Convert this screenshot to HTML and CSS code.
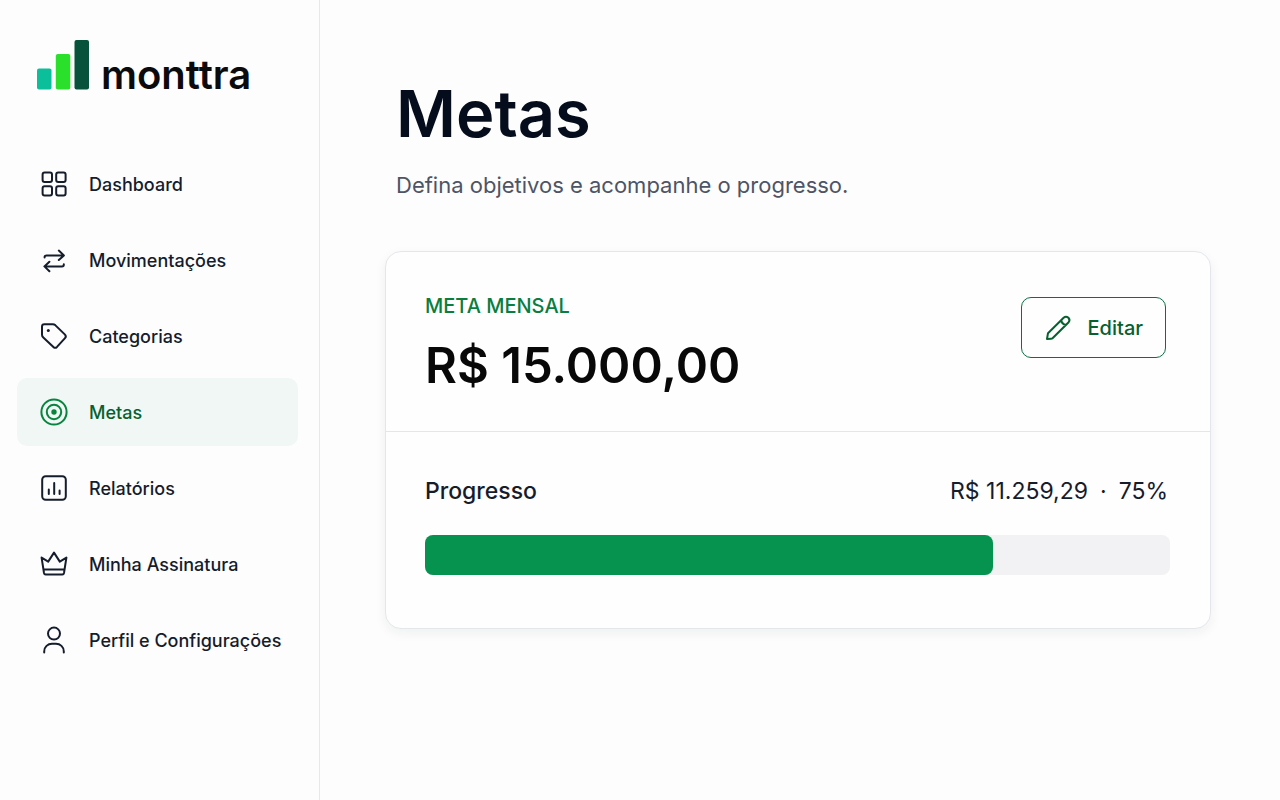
FILE: index.html
```html
<!DOCTYPE html>
<html lang="pt-BR">
<head>
<meta charset="utf-8">
<meta name="viewport" content="width=device-width, initial-scale=1">
<title>Metas · monttra</title>
<link rel="stylesheet" href="styles.css">
</head>
<body>
<div class="app">
  <aside class="sidebar">
    <a class="brand" href="#">
      <svg class="brand-mark" viewBox="0 0 52 50" aria-hidden="true">
        <rect x="0" y="28.500" width="14.500" height="21" rx="2" fill="#0bbf9b"/>
        <rect x="18.800" y="14" width="14.500" height="35.500" rx="2" fill="#2be02b"/>
        <rect x="37.500" y="0" width="14.500" height="49.500" rx="2" fill="#06523a"/>
      </svg>
      <span class="brand-name">monttra</span>
    </a>
    <nav class="nav" aria-label="Principal">
      <a class="nav-item" href="#">
        <svg class="icon" viewBox="0 0 28 28" aria-hidden="true"><rect x="2.600" y="2.600" width="9.400" height="9.400" rx="2"/><rect x="16.200" y="2.600" width="9.400" height="9.400" rx="2"/><rect x="2.600" y="16.200" width="9.400" height="9.400" rx="2"/><rect x="16.200" y="16.200" width="9.400" height="9.400" rx="2"/></svg>
        <span>Dashboard</span>
      </a>
      <a class="nav-item" href="#">
        <svg class="icon" viewBox="0 0 28 28" aria-hidden="true"><path d="M4.600 11.600V11Q4.600 9.400 6.400 9.400H23.800M18.800 4.600L23.900 9.400L18.800 14M23.800 18.200V18.800Q23.800 20.400 22 20.400H4.800M9.400 15.800L4.400 20.400L9.400 25.200"/></svg>
        <span>Movimentações</span>
      </a>
      <a class="nav-item" href="#">
        <svg class="icon" viewBox="0 0 28 28" aria-hidden="true"><path d="M2 4.600Q2 2.200 4.400 2.200H12.800Q14.200 2.200 15.200 3.100L25 12.600Q26.600 14.400 25 16.200L17 24.900Q15.200 26.600 13.400 24.900L3.300 15.600Q2 14.400 2 12.800Z"/><circle class="solid" cx="8.300" cy="8.500" r="1.500"/></svg>
        <span>Categorias</span>
      </a>
      <a class="nav-item nav-item-active" href="#" aria-current="page">
        <svg class="icon" viewBox="0 0 28 28" aria-hidden="true"><circle cx="14" cy="14" r="12.600"/><circle cx="14" cy="14" r="7.200"/><circle class="solid" cx="14" cy="14" r="2.700"/></svg>
        <span>Metas</span>
      </a>
      <a class="nav-item" href="#">
        <svg class="icon" viewBox="0 0 28 28" aria-hidden="true"><rect x="2.200" y="2.200" width="23.600" height="23.600" rx="3.500"/><path d="M8.800 15.400V20M14.200 9V20M19.600 16.600V20"/></svg>
        <span>Relatórios</span>
      </a>
      <a class="nav-item" href="#">
        <svg class="icon" viewBox="0 0 28 28" aria-hidden="true"><path d="M1.600 7.600L8.200 11.600L14 2.600L19.800 11.600L26.400 7.600L24 23Q23.700 24.400 22.400 24.400H5.600Q4.300 24.400 4 23ZM3.600 19.600H24.400"/></svg>
        <span>Minha Assinatura</span>
      </a>
      <a class="nav-item" href="#">
        <svg class="icon" viewBox="0 0 28 28" aria-hidden="true"><circle cx="14" cy="7.600" r="6"/><path d="M4.200 26.400V25.400C4.200 20.800 7.800 17.800 12 17.800H16C20.200 17.800 23.800 20.800 23.800 25.400V26.400"/></svg>
        <span>Perfil e Configurações</span>
      </a>
    </nav>
  </aside>

  <main class="main">
    <header class="page-header">
      <h1 class="page-title">Metas</h1>
      <p class="page-subtitle">Defina objetivos e acompanhe o progresso.</p>
    </header>
    <section class="card">
      <div class="goal">
        <div class="goal-info">
          <h2 class="goal-label">META MENSAL</h2>
          <p class="goal-value">R$ 15.000,00</p>
        </div>
        <button class="edit-button" type="button">
          <svg class="icon" viewBox="0 0 28 28" aria-hidden="true"><path d="M3 25L4 19.200L19.600 3.800Q22 1.600 24.400 3.800Q26.600 6.200 24.400 8.500L8.800 24Q8 24.800 7 24.800ZM17.200 6.200Q18 10.200 21.800 10.800"/></svg>
          <span>Editar</span>
        </button>
      </div>
      <div class="progress">
        <div class="progress-head">
          <span class="progress-label" id="progress-label">Progresso</span>
          <span class="progress-value"><span>R$ 11.259,29</span><span>·</span><span>75%</span></span>
        </div>
        <div class="track" role="progressbar" aria-labelledby="progress-label" aria-valuemin="0" aria-valuemax="100" aria-valuenow="75">
          <div class="track-fill" style="width: 76.2%"></div>
        </div>
      </div>
    </section>
  </main>
</div>
</body>
</html>
```
FILE: styles.css
```css
* {
  box-sizing: border-box;
}

body {
  margin: 0;
  background: #fdfdfd;
  color: #151c2c;
  font-family: Inter, "Liberation Sans", sans-serif;
}

h1, h2, p {
  margin: 0;
}

.app {
  display: grid;
  grid-template-columns: 320px 1fr;
  min-height: 100vh;
}

.sidebar {
  min-width: 0;
  padding: 40px 21px 40px 17px;
  border-right: 1px solid #e6e8eb;
}

.brand {
  display: flex;
  align-items: flex-end;
  gap: 12px;
  height: 50px;
  margin-bottom: 60px;
  padding-left: 20px;
  color: #0b0b0d;
  text-decoration: none;
}

.brand-mark {
  width: 52px;
  height: 50px;
}

.brand-name {
  font-size: 40px;
  font-weight: 600;
  line-height: 30px;
}

.nav {
  display: grid;
  gap: 8px;
}

.nav-item {
  display: flex;
  align-items: center;
  gap: 21px;
  height: 68px;
  padding: 0 12px 0 23px;
  border-radius: 10px;
  color: #151c2c;
  font-size: 18px;
  font-weight: 500;
  white-space: nowrap;
  text-decoration: none;
}

.nav-item-active {
  background: #f0f7f4;
  color: #07612f;
}

.nav-item-active .icon {
  color: #07853f;
}

.icon {
  flex: none;
  width: 28px;
  height: 28px;
  fill: none;
  stroke: currentColor;
  stroke-width: 2;
  stroke-linecap: round;
  stroke-linejoin: round;
}

.solid {
  fill: currentColor;
  stroke: none;
}

.main {
  padding: 72px 69px 40px 65px;
}

.page-header {
  margin-bottom: 49px;
  padding-left: 11px;
}

.page-title {
  color: #050d1c;
  font-size: 65px;
  font-weight: 600;
  line-height: 84px;
}

.page-subtitle {
  margin-top: 12px;
  color: #4d5466;
  font-size: 22px;
  line-height: 34px;
}

.card {
  border: 1px solid #e4e7ea;
  border-radius: 16px;
  background: #fefefe;
  box-shadow: 0 4px 12px rgba(15, 40, 30, 0.06);
}

.goal {
  display: flex;
  align-items: flex-start;
  justify-content: space-between;
  padding: 39px 44px 31px 39px;
  border-bottom: 1px solid #e4e7ea;
}

.goal-label {
  color: #0a7d3f;
  font-size: 20px;
  font-weight: 500;
  line-height: 30px;
}

.goal-value {
  margin-top: 11px;
  color: #080808;
  font-size: 49px;
  font-weight: 600;
  line-height: 68px;
}

.edit-button {
  display: flex;
  align-items: center;
  gap: 16px;
  height: 61px;
  margin-top: 6px;
  padding: 0 22px;
  border: 1px solid #0a7042;
  border-radius: 10px;
  background: #fefefe;
  color: #06602f;
  font: inherit;
  font-size: 20px;
  font-weight: 500;
}

.progress {
  padding: 43px 40px 53px 39px;
}

.progress-head {
  display: flex;
  justify-content: space-between;
  margin-bottom: 28px;
  padding-right: 2px;
  font-size: 23px;
  line-height: 32px;
}

.progress-label {
  font-weight: 500;
}

.progress-value {
  display: flex;
  gap: 12px;
}

.track {
  height: 40px;
  border-radius: 8px;
  background: #f2f2f4;
}

.track-fill {
  height: 100%;
  border-radius: 8px;
  background: #06934f;
}
```
